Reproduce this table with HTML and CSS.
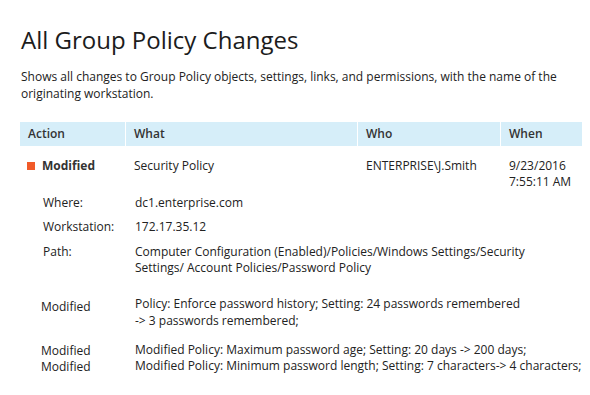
FILE: index.html
```html
<!DOCTYPE html>
<html lang="en">
<head>
  <meta charset="UTF-8">
  <title>All Group Policy Changes</title>
  <link rel="stylesheet" href="styles.css">
</head>
<body>
  <div class="report">
    <h1 class="title">All Group Policy Changes</h1>
    <p class="intro">Shows all changes to Group Policy objects, settings, links, and permissions, with the name of the originating workstation.</p>

    <div class="grid head">
      <div class="cell">Action</div>
      <div class="cell">What</div>
      <div class="cell">Who</div>
      <div class="cell">When</div>
    </div>

    <div class="grid entry">
      <div class="cell action"><span class="marker"></span>Modified</div>
      <div class="cell">Security Policy</div>
      <div class="cell">ENTERPRISE\J.Smith</div>
      <div class="cell">9/23/2016<br>7:55:11 AM</div>
    </div>

    <div class="details">
      <div class="detail where">
        <div class="label">Where:</div>
        <div class="value">dc1.enterprise.com</div>
      </div>
      <div class="detail workstation">
        <div class="label">Workstation:</div>
        <div class="value">172.17.35.12</div>
      </div>
      <div class="detail path">
        <div class="label">Path:</div>
        <div class="value">Computer Configuration (Enabled)/Policies/Windows Settings/Security<br>Settings/ Account Policies/Password Policy</div>
      </div>
    </div>

    <div class="changes">
      <div class="change first">
        <div class="kind">Modified</div>
        <div class="value">Policy: Enforce password history; Setting: 24 passwords remembered<br>-&gt; 3 passwords remembered;</div>
      </div>
      <div class="change second">
        <div class="kind">Modified<br>Modified</div>
        <div class="value">Modified Policy: Maximum password age; Setting: 20 days -&gt; 200 days;<br>Modified Policy: Minimum password length; Setting: 7 characters-&gt; 4 characters;</div>
      </div>
    </div>
  </div>
</body>
</html>
```

FILE: styles.css
```css
body {
  margin: 0;
  background: #FFFFFF;
  font-family: 'Open Sans', 'Noto Sans', Arial, sans-serif;
  color: #222222;
}
.report {
  padding: 24px 8px 0 20px;
}
.title {
  margin: 0 0 0 1px;
  font-size: 24px;
  font-weight: 400;
  line-height: 32px;
  color: #1C1C1C;
}
.intro {
  margin: 12px 0 0 1px;
  font-size: 12px;
  line-height: 17px;
  width: 560px;
}
.grid {
  display: grid;
  grid-template-columns: 105px 232px 143px 82px;
  font-size: 12px;
  line-height: 16px;
}
.head {
  margin-top: 20px;
}
.head .cell {
  background: #D6EEF9;
  height: 24px;
  line-height: 24px;
  padding-left: 8px;
  font-weight: 600;
  color: #333333;
  border-left: 1px solid #FFFFFF;
}
.head .cell:first-child {
  border-left: none;
}
.entry {
  margin-top: 12px;
}
.entry .cell {
  padding-left: 9px;
}
.entry .action {
  padding-left: 7px;
  display: flex;
  align-items: center;
  height: 16px;
  font-weight: 700;
  color: #333333;
}
.marker {
  width: 8px;
  height: 8px;
  background: #F15A29;
  margin-right: 7px;
}
.details, .changes {
  font-size: 12px;
  line-height: 16px;
}
.detail, .change {
  display: grid;
  grid-template-columns: 115px 1fr;
}
.detail .label {
  padding-left: 23px;
}
.where {
  margin-top: 5px;
}
.workstation {
  margin-top: 8px;
}
.path {
  margin-top: 9px;
}
.change .kind {
  padding-left: 21px;
}
.first {
  margin-top: 20px;
  line-height: 16.5px;
}
.first .kind {
  padding-top: 3px;
}
.second {
  margin-top: 13px;
  line-height: 16px;
}
.second .kind {
  padding-top: 1px;
}
```
